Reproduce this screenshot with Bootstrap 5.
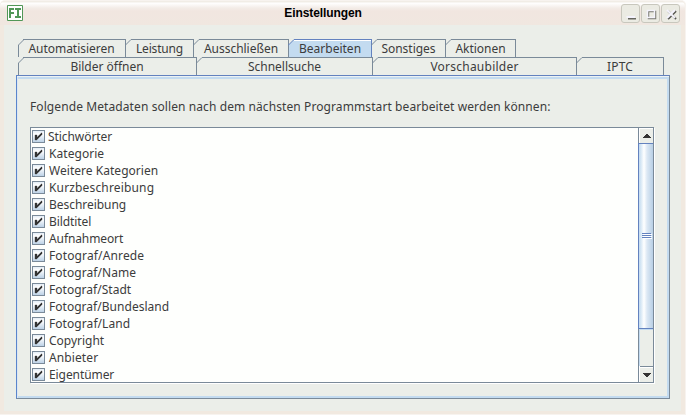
<!DOCTYPE html>
<html lang="de">
<head>
<meta charset="utf-8">
<title>Einstellungen</title>
<link href="https://cdn.jsdelivr.net/npm/bootstrap@5.3.0/dist/css/bootstrap.min.css" rel="stylesheet">
<style>
:root{--line:#7a8a99;--focus:#6382bf;--face:#ebeee9;--ink:#3c3c3c}
body{width:686px;height:415px;background:#fff;font:12px/17px "Noto Sans","Open Sans",sans-serif;color:var(--ink);letter-spacing:.2px}
.app-window{width:686px;height:415px;padding:0 4px 4px;background:#f1e9e0;border-radius:5px 5px 0 0;border:solid #f7f3ef;border-width:1px 1px 1px 0}
.titlebar{height:24px;margin:0 -4px;padding:0 5px 0 7px;background:linear-gradient(#f1ede6 0 1px,#fff 2px,#f3ece7 7px,#f1e6e0 10px,#f0e7e0);border-radius:5px 5px 0 0}
.titlebar h1{font:bold 12px/16px "Liberation Sans",Arial,sans-serif;color:#000;letter-spacing:0;padding:4px 0 0 2px}
.win-buttons{gap:1px;padding-top:3px}
.client{height:386px;background:var(--face);padding:14px 12px 0}
.tabs{height:18px;margin-left:2px}
.tab-item{position:relative;height:18px;border-right:1px solid var(--line);background:linear-gradient(var(--line),var(--line)) 5px 0/100% 1px no-repeat;white-space:nowrap;padding-top:1px}
.tab-item:first-child::before{content:"";position:absolute;left:0;top:6px;bottom:0;width:1px;background:var(--line)}
.tab-item:first-child{z-index:1}
.tab-item svg{position:absolute;left:-1px;top:0}
.tab-item:first-child svg{left:0}
.tab-item.chosen{border-color:var(--focus);background:linear-gradient(var(--focus),var(--focus)) 5px 0/100% 1px no-repeat,linear-gradient(#fff,#fff) 5px 1px/100% 1px no-repeat,linear-gradient(135deg,transparent 4px,#c3dbf0 4px)}
.pane{height:324px;width:654px;border:1px solid var(--line);border-top-color:var(--focus);border-left-color:#5a85cc;box-shadow:inset 0 1px #edf2f3,inset 1px 0 #dce7f3,inset -2px -2px #c3dbf0,inset 0 3px #c3dbf0;padding:22px 13px}
.pane p{height:17px;line-height:17px;margin-bottom:12px;white-space:nowrap}
.listbox{width:624px;height:256px;border:1px solid var(--line);background:#fefffd;box-shadow:1px 1px #fff;overflow:hidden}
.entry{height:17px;padding-left:1px}
.entry svg{flex:none;margin-right:4px}
.entry:first-child svg{margin-right:3px}
.scroll{width:15px;border-left:1px solid var(--line);background:var(--face)}
.arrow{height:15px;border:1px solid #fff;border-width:1px 0 0 1px}
.arrow.lower{height:16px;border-top:0;box-shadow:inset 0 1px var(--line),inset 0 2px #fff}
.thumb{height:186px;margin-left:-1px;border:1px solid var(--focus);border-right:0;background:linear-gradient(90deg,#c3dbf0,#d8e8f5 2px,#fff 5px,#dce8f4 8px,#b8cfe5 14px)}
.rest{flex:1;border-top:1px solid #c3dbf0;border-left:1px solid #c3dbf0}
</style>
<script src="https://cdn.jsdelivr.net/npm/bootstrap@5.3.0/dist/js/bootstrap.bundle.min.js"></script>
</head>
<body class="m-0 overflow-hidden">
<svg width="0" height="0" class="position-absolute"><defs>
<linearGradient id="boxfill" x1="0" y1="0" x2="0" y2="1"><stop offset="0" stop-color="#dfeaf5"/><stop offset=".3" stop-color="#fff"/><stop offset="1" stop-color="#b8cfe5"/></linearGradient>
<symbol id="check" viewBox="0 0 13 13"><rect x=".5" y=".5" width="12" height="12" fill="url(#boxfill)" stroke="#7a8a99"/><path d="M3 5h2v2h1V6h1V5h1V4h1V3h1v2H9v1H8v1H7v1H6v1H5v1H3z" fill="#333" stroke="#333" stroke-width=".35"/></symbol>
<symbol id="corner" viewBox="0 0 6 7"><path d="M0 6.5L6 .5" fill="none" stroke="currentColor"/></symbol>
<symbol id="winbtn" viewBox="0 0 19 19"><rect x=".5" y=".5" width="18" height="18" rx="2.5" fill="#ebebe3" stroke="#c8c7bd"/></symbol>
</defs></svg>
<main class="app-window">
<header class="titlebar d-flex justify-content-between">
<svg width="16" height="16" class="mt-1" viewBox="0 0 16 16"><path fill="#fff" stroke="#519757" d="M.5.5h15v15H.5z"/><path fill="#519757" d="M2 3h5v2H4v2h3v2H4v4H2zM8 3h6v2h-2v6h2v2H8v-2h2V5H8z"/></svg>
<h1 class="m-0 flex-fill text-center"><span id="caption">Einstellungen</span></h1>
<div class="win-buttons d-flex">
<svg width="19" height="19"><use href="#winbtn"/><path d="M7 14h8v1.5H7z" fill="#66665f"/><path d="M5.500 12h8.500v2H5.500z" fill="#f4f3fc"/></svg>
<svg width="19" height="19"><use href="#winbtn"/><path d="M7.500 7.500h7v7h-7z" fill="none" stroke="#77776f" stroke-width="1.500"/><path d="M6.500 6.500h7v7h-7z" fill="none" stroke="#f4f3fc" stroke-width="1.500"/></svg>
<svg width="19" height="19"><use href="#winbtn"/><path d="M7 7l8 8m0-8l-8 8" stroke="#55554f" stroke-width="2"/><path d="M6 6l8 8m0-8l-8 8" stroke="#f4f3fc" stroke-width="2"/></svg>
</div>
</header>
<section class="client">
<nav class="tabs d-flex text-center" id="upper"></nav>
<nav class="tabs d-flex text-center" id="lower"></nav>
<div class="pane">
<p><span id="lead-text">Folgende Metadaten sollen nach dem nächsten Programmstart bearbeitet werden können:</span></p>
<div class="listbox d-flex">
<div class="flex-fill" id="entries"></div>
<div class="scroll d-flex flex-column">
<div class="arrow"><svg class="d-block" width="14" height="14"><path d="M6 5h2v1h1v1h1v1h1v1H3V8h1V7h1V6h1z" fill="#333"/></svg></div>
<div class="thumb"><svg class="d-block" width="14" height="184"><path d="M4 90.5h9m-9 2h9m-9 2h9" stroke="#fff"/><path d="M3 89.5h9m-9 2h9m-9 2h9" stroke="#6382bf"/></svg></div>
<div class="rest"></div>
<div class="arrow lower"><svg class="d-block" width="14" height="15"><path d="M3 7h8v1h-1v1H9v1H8v1H6v-1H5V9H4V8H3z" fill="#333"/></svg></div>
</div></div></div>
</section>
</main>
<script>
// Each tab: caption, outer width, caption width
const rows={upper:[["Automatisieren",108,86],["Leistung",68,47],["Ausschließen",95,74],["Bearbeiten",83,62],["Sonstiges",74,54],["Aktionen",70,50]],
lower:[["Bilder öffnen",179,73],["Schnellsuche",176,73],["Vorschaubilder",204,88],["IPTC",87,26]]};
const entries=[["Stichwörter",64],["Kategorie",55],["Weitere Kategorien",109],["Kurzbeschreibung",105],["Beschreibung",77],["Bildtitel",42],["Aufnahmeort",74],["Fotograf/Anrede",95],["Fotograf/Name",87],["Fotograf/Stadt",82],["Fotograf/Bundesland",120],["Fotograf/Land",81],["Copyright",55],["Anbieter",49],["Eigentümer",65]];
for(const [id,tabs] of Object.entries(rows)){
 document.getElementById(id).innerHTML=tabs.map(([t,w,n])=>`<div class="tab-item ${t==="Bearbeiten"?"chosen":""}" style="width:${w}px"><svg width="6" height="7" style="color:${t==="Bearbeiten"?"#6382bf":"#7a8a99"}"><use href="#corner"/></svg><span data-w="${n}">${t}</span></div>`).join("");
}
document.getElementById("entries").innerHTML=entries.map(([t,n])=>`<div class="entry d-flex align-items-center"><svg width="13" height="13"><use href="#check"/></svg><span class="text-nowrap" data-w="${n}">${t}</span></div>`).join("");
// Tracks every label to its nominal width
function track(el,w){el.style.letterSpacing="0px";const r=document.createRange();r.selectNodeContents(el);const cur=r.getBoundingClientRect().width;el.style.letterSpacing=((w-cur)/el.textContent.length).toFixed(3)+"px"}
document.querySelectorAll("[data-w]").forEach(e=>track(e,+e.dataset.w+.2));
track(document.getElementById("lead-text"),520.5);
track(document.getElementById("caption"),77.5);
</script>
</body>
</html>
